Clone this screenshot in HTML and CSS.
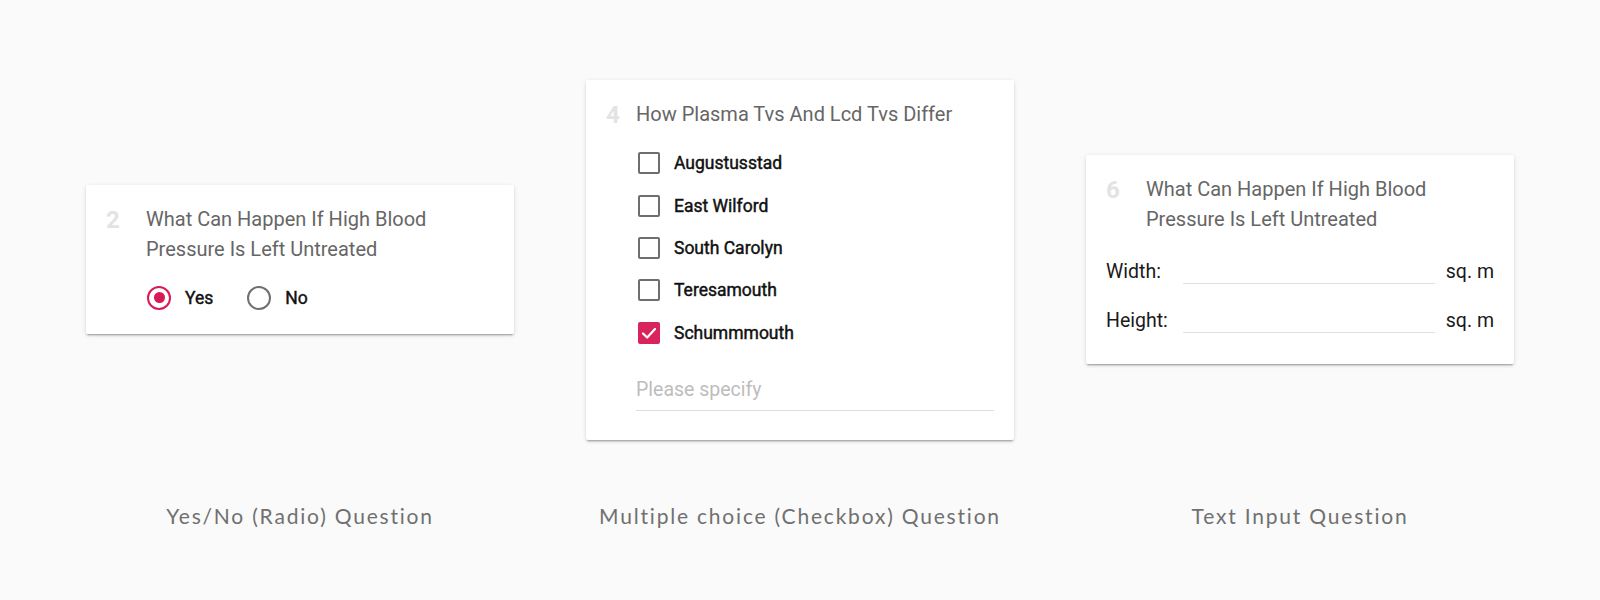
FILE: index.html
```html
<!DOCTYPE html>
<html lang="en">
<head>
<meta charset="utf-8">
<title>Question types</title>
<link rel="stylesheet" href="styles.css">
</head>
<body>
<div class="board">
  <div class="column">
    <div class="slot">
      <div class="card card-radio">
        <div class="head">
          <div class="num">2</div>
          <div class="question">What Can Happen If High Blood Pressure Is Left Untreated</div>
        </div>
        <div class="options">
          <div class="option">
            <span class="radio checked"><span class="dot"></span></span>
            <span class="opt-label">Yes</span>
          </div>
          <div class="option">
            <span class="radio"></span>
            <span class="opt-label">No</span>
          </div>
        </div>
      </div>
    </div>
    <div class="caption">Yes/No (Radio) Question</div>
  </div>

  <div class="column">
    <div class="slot">
      <div class="card card-multi">
        <div class="head">
          <div class="num num-narrow">4</div>
          <div class="question">How Plasma Tvs And Lcd Tvs Differ</div>
        </div>
        <div class="multi-body">
          <ul class="checks">
            <li class="check-item"><span class="box"></span><span class="opt-label">Augustusstad</span></li>
            <li class="check-item"><span class="box"></span><span class="opt-label">East Wilford</span></li>
            <li class="check-item"><span class="box"></span><span class="opt-label">South Carolyn</span></li>
            <li class="check-item"><span class="box"></span><span class="opt-label">Teresamouth</span></li>
            <li class="check-item"><span class="box checked"><svg viewBox="0 0 22 22" width="22" height="22"><polyline points="5,11.5 9.2,15.5 17,7" fill="none" stroke="#fff" stroke-width="2.2" stroke-linecap="round" stroke-linejoin="round"/></svg></span><span class="opt-label">Schummmouth</span></li>
          </ul>
          <div class="specify">Please specify</div>
        </div>
      </div>
    </div>
    <div class="caption">Multiple choice (Checkbox) Question</div>
  </div>

  <div class="column">
    <div class="slot">
      <div class="card card-text">
        <div class="head">
          <div class="num">6</div>
          <div class="question">What Can Happen If High Blood Pressure Is Left Untreated</div>
        </div>
        <div class="fields">
          <span class="field-label">Width:</span>
          <span class="field-input"></span>
          <span class="field-unit">sq. m</span>
          <span class="field-label">Height:</span>
          <span class="field-input"></span>
          <span class="field-unit">sq. m</span>
        </div>
      </div>
    </div>
    <div class="caption">Text Input Question</div>
  </div>
</div>
</body>
</html>
```

FILE: styles.css
```css
html, body {
  margin: 0;
  padding: 0;
  background: #fafafa;
}

body {
  width: 1600px;
  height: 600px;
  overflow: hidden;
  font-family: Roboto, "Noto Sans", sans-serif;
}

.board {
  display: grid;
  grid-template-columns: repeat(3, 500px);
  justify-content: center;
  padding-top: 20px;
}

.column {
  display: flex;
  flex-direction: column;
}

.slot {
  height: 478px;
  display: flex;
  align-items: center;
  justify-content: center;
}

.card {
  width: 428px;
  box-sizing: border-box;
  background: #fff;
  border-radius: 2px;
  padding: 19px 20px 23px 20px;
  box-shadow: 0 3px 1px -2px rgba(0, 0, 0, 0.16), 0 2px 2px 0 rgba(0, 0, 0, 0.12), 0 1px 5px 0 rgba(0, 0, 0, 0.10);
}

.head {
  display: flex;
  align-items: flex-start;
}

.num {
  width: 40px;
  flex: none;
  font-size: 24px;
  line-height: 30px;
  font-weight: 700;
  color: #e3e3e3;
  margin-top: 1px;
}

.num-narrow {
  width: 30px;
}

.question {
  flex: 1;
  font-size: 20px;
  line-height: 30px;
  color: #666666;
}

/* radio card */
.card-radio {
  padding-bottom: 24px;
}

.options {
  display: flex;
  gap: 34px;
  margin: 22px 0 0 41px;
}

.option {
  display: flex;
  align-items: center;
  gap: 14px;
  height: 24px;
}

.radio {
  width: 24px;
  height: 24px;
  box-sizing: border-box;
  border: 2.5px solid #707070;
  border-radius: 50%;
  display: flex;
  align-items: center;
  justify-content: center;
}

.radio.checked {
  border-color: #d81b55;
}

.dot {
  width: 11px;
  height: 11px;
  border-radius: 50%;
  background: #d81b55;
}

.opt-label {
  font-size: 17.5px;
  line-height: 24px;
  font-weight: 400;
  -webkit-text-stroke: 0.45px #111;
  color: #111;
}

/* checkbox card */
.card-multi {
  padding-bottom: 29px;
  margin-top: 2px;
}

.multi-body {
  margin-left: 30px;
}

.checks {
  list-style: none;
  margin: 21px 0 0 0;
  padding: 0;
  display: flex;
  flex-direction: column;
  gap: 18.4px;
}

.check-item {
  display: flex;
  align-items: center;
  gap: 14px;
  height: 24px;
  padding-left: 2px;
}

.box {
  width: 22px;
  height: 22px;
  box-sizing: border-box;
  border: 2px solid #6e6e6e;
  border-radius: 2px;
  flex: none;
}

.box.checked {
  border: none;
  background: #d8235c;
}

.box svg {
  display: block;
}

.specify {
  margin-top: 28px;
  height: 38px;
  box-sizing: border-box;
  padding-bottom: 4px;
  border-bottom: 1px solid #dedede;
  font-size: 19.5px;
  line-height: 33px;
  color: #bdbdbd;
}

/* text input card */
.card-text {
  padding-bottom: 25px;
}

.fields {
  display: grid;
  grid-template-columns: 66px 1fr auto;
  column-gap: 11px;
  row-gap: 13px;
  margin-top: 20px;
  align-items: start;
}

.field-label,
.field-unit {
  font-size: 19.5px;
  line-height: 36px;
  color: #1a1a1a;
}

.field-input {
  height: 30px;
  border-bottom: 1px solid #e0e0e0;
  box-sizing: border-box;
}

.caption {
  margin-top: 4px;
  text-align: center;
  font-family: Lato, "Open Sans", sans-serif;
  font-size: 21px;
  line-height: 28px;
  letter-spacing: 1.8px;
  color: #707070;
}
```
